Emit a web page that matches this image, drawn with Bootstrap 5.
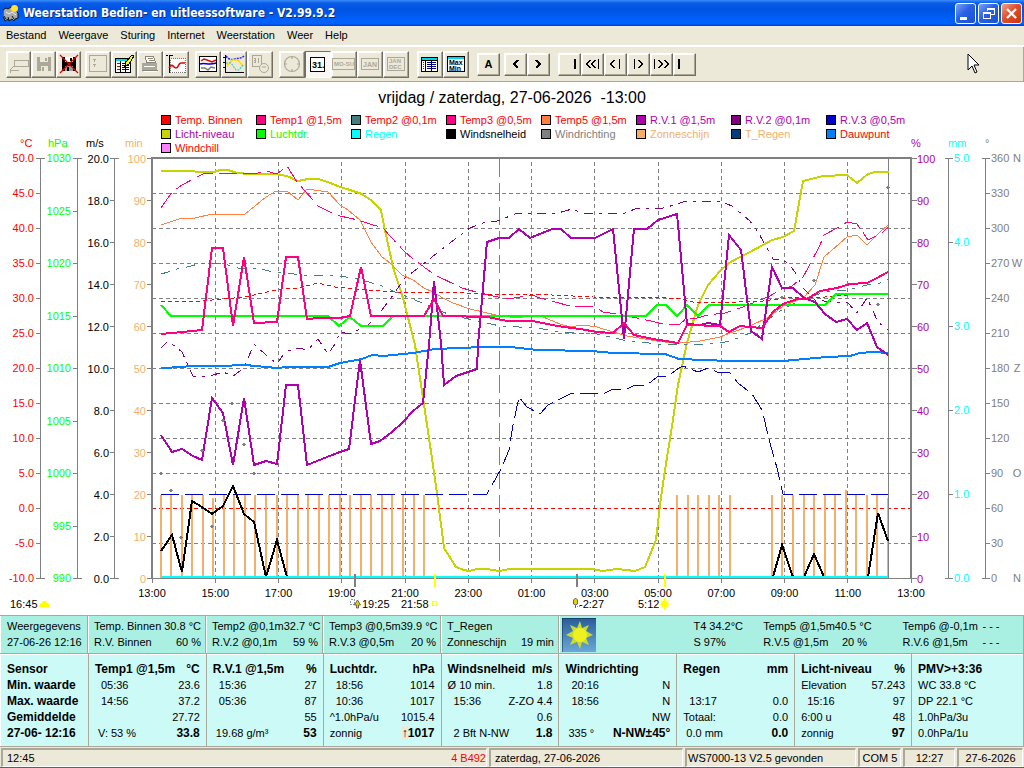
<!DOCTYPE html>
<html lang="nl">
<head>
<meta charset="utf-8">
<meta name="viewport" content="width=device-width, initial-scale=1">
<title>Weerstation Bedien- en uitleessoftware - V2.99.9.2</title>
<link rel="stylesheet" href="https://cdn.jsdelivr.net/npm/bootstrap@5.3.0/dist/css/bootstrap.min.css">
<style>
body{font:11px/16px "Liberation Sans",Arial,sans-serif;color:#000;background:#fff}
.titlebar{height:26px;background:linear-gradient(#3a8cf8 0,#0a5ce8 12%,#0053e1 35%,#0062fc 80%,#0062fc 90%,#003dd7);color:#fff;padding:0 2px 0 3px}
.titlebar h1{font:bold 12px/26px "DejaVu Sans Condensed","DejaVu Sans",sans-serif;text-shadow:1px 1px 0 #0a2c80}
.winbtns{gap:2px}
.wbtn{width:21px;height:21px;padding:0;border:1px solid #fff;border-radius:3px;background:linear-gradient(135deg,#7ba2f5,#2a60e4 45%,#1c50d4);line-height:0}
.wclose{background:linear-gradient(135deg,#f0a08c,#e0502c 45%,#c8340c)}
.menubar{height:21px;background:#ece9d8;border-bottom:2px solid #fff;padding-top:1px}
.menubar a{padding:0 6px;color:#000;text-decoration:none}
.tools{height:35px;background:#ece9d8;border-bottom:1px solid #aca899;border-right:1px solid #aca899;padding-left:6px}
.tbtn{width:26px;height:27px;padding:0;border:1px solid;border-color:#fff #716f64 #716f64 #fff;box-shadow:inset -1px -1px #aca899,inset 1px 1px #fff;background:#ece9d8;line-height:0;display:flex;align-items:center;justify-content:center}
.slim .tbtn{width:25px}
.flat .tbtn{width:23px;height:23px}
.tbtn.held{border-color:#716f64 #fff #fff #716f64;box-shadow:none;background:#f8f7f1}
.g4{margin-left:4px}.g6{margin-left:6px}.g8{margin-left:8px}
.pointer{margin-right:43px}
svg{display:block}
.px{shape-rendering:crispEdges}
.plot{width:100%;height:auto}
.plot text{font-size:11px}
.strip{display:grid;grid-template-columns:88fr 118fr 117fr 118fr 118fr minmax(0,465fr);background:#aaf0e2;border-top:1px solid #aca899;border-bottom:1px solid #aca899;height:39px}
.strip>div{padding:2px 4px 0 5px;border-left:1px solid #fff;border-right:1px solid #aca899;white-space:nowrap;min-width:0}
.strip>div:first-child{padding-left:6px}
.strip>.outdoor{display:grid;grid-template-columns:132fr 70fr 140fr 121fr;padding:2px 0 0 2px}
.pair{display:flex;justify-content:space-between;white-space:pre}
.t5{width:107px}.t6{width:97px}
.panel{table-layout:fixed;width:100%;background:#ccfaf7;border-top:1px solid #fff}
.panel td,.panel th{padding:0 6px;height:16px;border-left:1px solid #fff;border-right:1px solid #aca899;font-weight:400}
.panel thead th{padding-top:6px}
.panel tbody tr:last-child>*{padding-bottom:5px}
.panel thead th,.panel tbody th,.panel b{font-weight:700;font-size:12px}
.ind{padding-left:6px}
.arrow{background:#ece9d8;font-weight:700}
.statusline{display:grid;grid-template-columns:488fr 196fr 173fr 45fr 54fr 68fr;height:21px;background:#ece9d8;border-top:1px solid #aca899}
.statusline>div{margin:1px 1px 0 1px;padding:0 4px;border:1px solid;border-width:2px 1px 1px 2px;border-color:#aca899 #fff #fff #aca899;white-space:nowrap;line-height:16px;min-width:0}
.statusline .tight{padding-left:1px;padding-right:1px}
.alert-count{color:#f00}
.edge{height:2px;background:#2a64d8}
</style>
</head>
<body class="d-flex flex-column min-vh-100">
<header>
<div class="titlebar d-flex align-items-center">
<svg width="16" height="18" viewBox="0 0 16 18"><path d="M0 6l3-2 2 1 3-2 4 3 3 3v5l-3 1-1 2-2-2-3 2-1-2-3 2-1-3-1-1z" fill="#aaa" stroke="#111"/><path d="M3 8l3 2 3-2 4 3" stroke="#eee" fill="none"/><circle cx="11.500" cy="4.500" r="3.500" fill="#ffe32e"/><path d="M1 12l2 3M5 13l1 3M9 12l2 3" stroke="#111"/></svg>
<h1 class="m-0 ms-1">Weerstation Bedien- en uitleessoftware - V2.99.9.2</h1>
<div class="ms-auto d-flex winbtns">
<button class="wbtn" aria-label="Minimaliseren"><svg width="19" height="19"><path d="M4 13h7v3H4z" fill="#fff"/></svg></button>
<button class="wbtn" aria-label="Verkleinen"><svg class="px" width="19" height="19" fill="none" stroke="#fff"><path d="M4.500 8.500h7v6h-7z M4 9.500h8M8 6.500V4.500h7v6h-3M8 5.500h7"/></svg></button>
<button class="wbtn wclose" aria-label="Sluiten"><svg width="19" height="19"><path d="M5 5l9 9M14 5l-9 9" stroke="#fff" stroke-width="2.400"/></svg></button>
</div>
</div>
<nav class="menubar d-flex"><a href="#">Bestand</a><a href="#">Weergave</a><a href="#">Sturing</a><a href="#">Internet</a><a href="#">Weerstation</a><a href="#">Weer</a><a href="#">Help</a></nav>
<div class="tools d-flex align-items-center" role="toolbar">
<div class="d-flex slim">
<button class="tbtn" aria-label="Openen"><svg class="px" width="22" height="22" fill="none" stroke="#aca899"><path d="M6.500 7.500h14v6h-14zM6 13l-4 4M2 17.500h9M2 16v4"/></svg></button>
<button class="tbtn" aria-label="Opslaan"><svg class="px" width="18" height="18"><path d="M2 2h14v14H2z" fill="#aca899"/><path d="M5 2h8v5H5zM6 11h7v5H6z" fill="#ece9d8"/><path d="M10 3h2v3h-2zM7 12h2v4H7z" fill="#aca899"/></svg></button>
<button class="tbtn" aria-label="Niet opslaan"><svg width="20" height="20"><path class="px" d="M3 3h14v14H3z" fill="#000"/><path class="px" d="M6 3h8v5H6z" fill="#fff"/><path class="px" d="M6 12h8v5H6z" fill="#999"/><path class="px" d="M11 4h2v3h-2zM8 13h2v4H8z" fill="#000"/><path d="M1 1l18 18M19 1L1 19" stroke="#e00000" stroke-width="1.200"/></svg></button>
</div>
<div class="d-flex g4">
<button class="tbtn" aria-label="Tabel"><svg class="px" width="20" height="20" fill="none" stroke="#aca899"><path d="M1.500 1.500h17v16h-17zM5 5.500h3M6.500 5v3M5 10.500h3M6.500 10v3"/></svg></button>
<button class="tbtn" aria-label="Bewerken"><svg class="px" width="20" height="20"><path d="M1.500 4.500h15v14h-15z" fill="#fff" stroke="#000"/><path d="M2 5h14v2H2z" fill="#00d8e8"/><path d="M3 9.500h3M3 12.500h3M3 15.500h3" stroke="#c00"/><path d="M8 9.500h7M8 11.500h7M8 13.500h7M8 15.500h7" stroke="#000080"/><path d="M6.500 7v11M11.500 7v11" stroke="#000"/><path d="M18 1l-6 7-1 4 4-2 5-8z" fill="#ff0" stroke="#000"/></svg></button>
<button class="tbtn" aria-label="Afdrukken"><svg class="px" width="20" height="20"><path d="M2 9h15v7H2z" fill="#aca899"/><path d="M5.500 2.500h8l2 6h-9zM8 4.500h5M9 6.500h5" fill="#fff" stroke="#8a877a"/><path d="M4 12.500h11M4 17.500h13" stroke="#fff"/><path d="M2 16.500h16" stroke="#8a877a"/></svg></button>
<button class="tbtn" aria-label="Temperatuurgrafiek"><svg width="22" height="22"><path class="px" d="M5.500 5.500h15v14h-15z" fill="#fff" stroke="#777" stroke-dasharray="1 1"/><path class="px" d="M4.500 5v15M1 2.500h2M5 2.500h3M4.500 2v4" stroke="#000" fill="none"/><path d="M4 15c4-6 4 0 7 0s2-5 5-5l4 0" fill="none" stroke="#e00" stroke-width="1.700"/></svg></button>
</div>
<div class="d-flex g6">
<button class="tbtn" aria-label="Grafiek"><svg width="20" height="20"><path class="px" d="M1.500 2.500h17v15h-17z" fill="#fff" stroke="#000"/><path d="M3 7l3-2 3 1 5 2 4-2" fill="none" stroke="#e00" stroke-width="1.500"/><path d="M2 10c5-2 8 2 16-1" fill="none" stroke="#00c" stroke-width="1.500"/><path d="M3 14h4l3 2 3-3 4 1" fill="none" stroke="#777" stroke-width="1.500"/></svg></button>
<button class="tbtn" aria-label="Meerdere grafieken"><svg width="22" height="20" fill="none"><path class="px" d="M2.500 1v17h18" stroke="#000"/><path class="px" d="M0 3.500h2M0 8.500h2M0 13.500h2" stroke="#000"/><path d="M3 2c3 4 6 4 9 3s6 0 9-3" stroke="#22f" stroke-width="1.500" stroke-dasharray="2 1"/><path d="M4 12l5-6 6 0 5 6" stroke="#fd0" stroke-width="1.700"/><path d="M3 9h5l5 7h3l4-5" stroke="#3cd" stroke-width="1.200" stroke-dasharray="2 1"/></svg></button>
<button class="tbtn" aria-label="Dagklok"><svg width="20" height="20" fill="none" stroke="#aca899"><path class="px" d="M2.500 1.500h9v11h-9zM4 4.500h2M4 6.500h2M4 8.500h2M5.500 4v5M8.500 4v5"/><circle cx="14" cy="14" r="4.500" fill="#ece9d8"/><path d="M12 13h4"/></svg></button>
</div>
<div class="d-flex g6">
<button class="tbtn" aria-label="Klok"><svg width="20" height="20" fill="none" stroke="#aca899" stroke-width="1.200"><circle cx="10" cy="10" r="7.500"/><path d="M10 2v3M10 15v3M2 10h3M15 10h3"/></svg></button>
<button class="tbtn held" aria-label="Dag"><svg width="18" height="18"><path class="px" d="M1.500 2.500h14v14h-14z" fill="#fff" stroke="#000" stroke-width="1"/><text x="3" y="13" font-size="9" font-weight="bold">31.</text></svg></button>
<button class="tbtn" aria-label="Week"><svg width="24" height="18"><path class="px" d="M.5 3.500h22v11h-22z" fill="none" stroke="#aca899"/><text x="2" y="11" font-size="6" font-weight="bold" fill="#aca899">MO-SU</text></svg></button>
<button class="tbtn" aria-label="Maand"><svg width="22" height="18"><path class="px" d="M2.500 3.500h17v11h-17z" fill="none" stroke="#aca899"/><text x="4" y="12" font-size="7" font-weight="bold" fill="#aca899">JAN</text></svg></button>
<button class="tbtn" aria-label="Jaar"><svg width="22" height="18"><path class="px" d="M2.500 2.500h17v13h-17z" fill="none" stroke="#aca899"/><text x="4" y="8" font-size="6" font-weight="bold" fill="#aca899">JAN</text><text x="4" y="14" font-size="6" font-weight="bold" fill="#aca899">DEC</text></svg></button>
</div>
<div class="d-flex g8">
<button class="tbtn" aria-label="Lijst"><svg class="px" width="20" height="18"><path d="M1.500 2.500h16v14h-16z" fill="#fff" stroke="#000"/><path d="M2 3h15v2H2z" fill="#00d8e8"/><path d="M2 5.500h15M5.500 5v11M11.500 5v11" stroke="#000"/><path d="M3 7.500h1M3 9.500h1M3 11.500h1M3 13.500h1" stroke="#c00"/><path d="M7 7.500h9M7 9.500h9M7 11.500h9M7 13.500h9" stroke="#000080"/></svg></button>
<button class="tbtn" aria-label="Max Min"><svg width="20" height="18"><path class="px" d="M1.500 1.500h17v15h-17z" fill="#fff" stroke="#000"/><path class="px" d="M2 2h16v2H2z" fill="#00d8e8"/><text x="3" y="10" font-size="7" font-weight="bold">Max</text><text x="3" y="16" font-size="7" font-weight="bold">Min</text></svg></button>
</div>
<div class="d-flex g8 flat"><button class="tbtn"><b>A</b></button></div>
<div class="d-flex g4 flat">
<button class="tbtn" aria-label="Vorige"><svg class="px" width="9" height="9"><path d="M7 0L3 4l4 4" fill="none" stroke="#000" stroke-width="1.500"/></svg></button>
<button class="tbtn" aria-label="Volgende"><svg class="px" width="9" height="9"><path d="M2 0l4 4-4 4" fill="none" stroke="#000" stroke-width="1.500"/></svg></button>
</div>
<div class="d-flex g8 flat px">
<button class="tbtn" aria-label="Begin"><svg width="17" height="11"><path d="M13 0h2v10h-2z"/></svg></button>
<button class="tbtn" aria-label="Ver terug"><svg width="17" height="11" fill="none" stroke="#000"><path d="M6.500 1L2.500 5l4 4M11.500 1l-4 4 4 4M14.500 0v10"/></svg></button>
<button class="tbtn" aria-label="Terug"><svg width="17" height="11" fill="none" stroke="#000"><path d="M7.500 1l-4 4 4 4M12.500 0v10"/></svg></button>
<button class="tbtn" aria-label="Vooruit"><svg width="17" height="11" fill="none" stroke="#000"><path d="M8.500 1l4 4-4 4M4.500 0v10"/></svg></button>
<button class="tbtn" aria-label="Ver vooruit"><svg width="17" height="11" fill="none" stroke="#000"><path d="M5.500 1l4 4-4 4M11.500 1l4 4-4 4M1.500 0v10"/></svg></button>
<button class="tbtn" aria-label="Einde"><svg width="17" height="11"><path d="M2 0h2v10H2z"/></svg></button>
</div>
<svg class="pointer ms-auto" width="13" height="22"><path d="M1 1v16l4-4 3 7 2-1-3-7h5z" fill="#fff" stroke="#000"/></svg>
</div>
</header>
<main class="flex-grow-1">
<svg class="plot" id="plot" viewBox="0 82 1024 533" role="img" aria-label="Weergrafiek"></svg>
</main>
<footer>
<section class="strip">
<div><div class="pair"><span>Weergegevens</span></div><div class="pair"><span>27-06-26 12:16</span></div></div>
<div><div class="pair"><span>Temp. Binnen</span><span>30.8 °C</span></div><div class="pair"><span>R.V. Binnen</span><span>60 %</span></div></div>
<div><div class="pair"><span>Temp2 @0,1m</span><span>32.7 °C</span></div><div class="pair"><span>R.V.2 @0,1m</span><span>59 %</span></div></div>
<div><div class="pair"><span>Temp3 @0,5m</span><span>39.9 °C</span></div><div class="pair"><span>R.V.3 @0,5m</span><span>20 %</span></div></div>
<div><div class="pair"><span>T_Regen</span></div><div class="pair"><span>Zonneschijn</span><span>19 min</span></div></div>
<div class="outdoor">
<svg width="34" height="34" viewBox="0 0 34 34"><defs><linearGradient id="sky" x2="0" y2="1"><stop stop-color="#2a5c98"/><stop offset="1" stop-color="#6aa8d8"/></linearGradient></defs><path d="M0 0h34v34H0z" fill="url(#sky)"/><path d="M0 34V0h34" fill="none" stroke="#124"/><path d="M18 3l2 7 7-3-3 6 7 4-7 3 3 7-7-3-2 7-3-7-7 3 3-7-7-3 7-4-3-6 7 3z" fill="#c8dc30"/><circle cx="18" cy="17" r="7" fill="#f0f020"/></svg>
<div><div>T4 34.2°C</div><div>S 97%</div></div>
<div class="t5"><div class="pair"><span>Temp5 @1,5m</span><span>40.5 °C</span></div><div class="pair"><span>R.V.5 @1,5m</span><span>20 % </span></div></div>
<div class="t6"><div class="pair"><span>Temp6 @-0,1m</span><span>- - -</span></div><div class="pair"><span>R.V.6 @1,5m</span><span>- - -</span></div></div>
</div>
</section>
<table class="panel">
<colgroup id="cols"></colgroup>
<thead><tr>
<th>Sensor</th>
<th><div class="pair"><span>Temp1 @1,5m</span><span>°C</span></div></th>
<th><div class="pair"><span>R.V.1 @1,5m</span><span>%</span></div></th>
<th><div class="pair"><span>Luchtdr.</span><span>hPa</span></div></th>
<th><div class="pair"><span>Windsnelheid</span><span>m/s</span></div></th>
<th>Windrichting</th>
<th><div class="pair"><span>Regen</span><span>mm</span></div></th>
<th><div class="pair"><span>Licht-niveau</span><span>%</span></div></th>
<th>PMV&gt;+3:36</th></tr></thead>
<tbody>
<tr><th>Min. waarde</th>
<td><div class="pair ind"><span>05:36</span><span>23.6</span></div></td>
<td><div class="pair ind"><span>15:36</span><span>27</span></div></td>
<td><div class="pair ind"><span>18:56</span><span>1014</span></div></td>
<td><div class="pair"><span>Ø 10 min.</span><span>1.8</span></div></td>
<td><div class="pair ind"><span>20:16</span><span>N</span></div></td>
<td></td>
<td><div class="pair"><span>Elevation</span><span>57.243</span></div></td>
<td>WC 33.8 °C</td></tr>
<tr><th>Max. waarde</th>
<td><div class="pair ind"><span>14:56</span><span>37.2</span></div></td>
<td><div class="pair ind"><span>05:36</span><span>87</span></div></td>
<td><div class="pair ind"><span>10:36</span><span>1017</span></div></td>
<td><div class="pair ind"><span>15:36</span><span>Z-ZO 4.4</span></div></td>
<td><div class="pair ind"><span>18:56</span><span>N</span></div></td>
<td><div class="pair ind"><span>13:17</span><span>0.0</span></div></td>
<td><div class="pair ind"><span>15:16</span><span>97</span></div></td>
<td>DP 22.1 °C</td></tr>
<tr><th>Gemiddelde</th>
<td class="text-end">27.72</td>
<td class="text-end">55</td>
<td><div class="pair"><span>^1.0hPa/u</span><span>1015.4</span></div></td>
<td class="text-end">0.6</td>
<td class="text-end">NW</td>
<td><div class="pair"><span>Totaal:</span><span>0.0</span></div></td>
<td><div class="pair"><span>6:00 u</span><span>48</span></div></td>
<td>1.0hPa/3u</td></tr>
<tr><th>27-06- 12:16</th>
<td><div class="pair"><span> V: 53 %</span><b>33.8</b></div></td>
<td><div class="pair"><span> 19.68 g/m³</span><b>53</b></div></td>
<td><div class="pair"><span>zonnig</span><b><span class="arrow">↑</span>1017</b></div></td>
<td><div class="pair ind"><span>2 Bft N-NW</span><b>1.8</b></div></td>
<td><div class="pair"><span> 335 °</span><b>N-NW±45°</b></div></td>
<td><div class="pair"><span> 0.0 mm</span><b>0.0</b></div></td>
<td><div class="pair"><span>zonnig</span><b>97</b></div></td>
<td>0.0hPa/1u</td></tr>
</tbody>
</table>
<div class="statusline">
<div class="d-flex justify-content-between pe-0"><span>12:45</span><span class="alert-count">4 B492</span></div>
<div>zaterdag, 27-06-2026</div>
<div class="tight">WS7000-13 V2.5 gevonden</div>
<div class="tight text-center">COM 5</div>
<div class="text-center">12:27</div>
<div class="text-center">27-6-2026</div>
</div>
<div class="edge"></div>
</footer>
<script src="https://cdn.jsdelivr.net/npm/bootstrap@5.3.0/dist/js/bootstrap.bundle.min.js"></script>
<script>
// Column widths of the sensor panel, as shares of the window width
document.getElementById('cols').innerHTML = [88,118,117,118,118,118,118,117,112]
  .map(w => `<col style="width:${w / 10.24}%">`).join('');

let out = '';
const line = (x1,y1,x2,y2,c='#808080',w=1,d='') => out += `<path class="px" d="M${x1} ${y1}L${x2} ${y2}" stroke="${c}" stroke-width="${w}" stroke-dasharray="${d}"/>`;
const text = (x,y,s,c='#000',a='start',size=11) => out += `<text x="${x}" y="${y}" fill="${c}" text-anchor="${a}" style="font-size:${size}px;white-space:pre">${s}</text>`;
const series = (pts,c,w=1,d='') => out += `<polyline class="px" points="${pts}" fill="none" stroke="${c}" stroke-width="${w}" stroke-dasharray="${d}"/>`;

text(512,103,'vrijdag / zaterdag, 27-06-2026  -13:00','#000','middle',16);

// Legend
[[['#f00','Temp. Binnen','#f00'],['#ff0080','Temp1 @1,5m','#f00'],['#408080','Temp2 @0,1m','#f00'],['#ff0080','Temp3 @0,5m','#f00'],['#ff8040','Temp5 @1,5m','#f00'],['#b000b0','R.V.1 @1,5m','#b000b0'],['#800080','R.V.2 @0,1m','#b000b0'],['#0000d0','R.V.3 @0,5m','#b000b0']],
 [['#c8d400','Licht-niveau','#b000b0'],['#0f0','Luchtdr.','#0f0'],['#0ff','Regen','#0ff'],['#000','Windsnelheid','#000'],['#808080','Windrichting','#808080'],['#f4b06a','Zonneschijn','#f4b06a'],['#004080','T_Regen','#f4b06a'],['#0080ff','Dauwpunt','#f00']],
 [['#ff80ff','Windchill','#f00']]].forEach((row,r) => row.forEach(([fill,name,ink],i) => {
  const x = 161 + 95*i, y = 115 + 14*r;
  out += `<rect class="px" x="${x+.5}" y="${y+.5}" width="9" height="9" fill="${fill}" stroke="#000"/>`;
  text(x+14, y+9, name, ink);
}));

// Grid
const X0 = 151.5, X1 = 911, Y0 = 158, Y1 = 578;
for (let i=1;i<12;i++) { line(152+i*63.25,162,152+i*63.25,Y1,'#808080',1,'4 3'); }
for (let i=1;i<12;i++) line(X0,Y0+35*i+.5,X1,Y0+35*i+.5,i==10?'#f00':'#808080',1,'4 3');
line(499.5,159,499.5,Y1,'#808080',1,'18 6');

// Sunshine minutes
for (let i=0;i<70;i++) if (i<26 || (i>48&&i<55) || i>57) {
  const x = Math.round(159.6+10.54*i);
  out += `<path class="px" d="M${x} ${i==5||i==69?498:i==65?490:495}h2V578h-2z" fill="#f4b06a"/>`;
}
// Plot frame
line(X0,158,X1+1,158,'#808080',2); line(152,157,152,579,'#808080',2); line(911,157,911,579,'#808080',2);
line(152,578.5,911,578.5); line(888.5,159,888.5,578);
for (let i=0;i<13;i++) {
  const x = 152+63.25*i; line(x,578,x,583);
  text(x,597,String((13+2*i)%24).padStart(2,'0')+':00','#000','middle');
}

// Axes on the left
const axis = (x) => { line(x,158,x,579,'#808080',1); line(x-4,158.5,x+4,158.5); line(x-4,578.5,x+4,578.5); };
axis(40.5); axis(77.5); axis(114.5);
for (let i=0;i<13;i++){ line(36,158.5+35*i,40,158.5+35*i); text(34,162+35*i,(50-5*i).toFixed(1),'#f00','end'); }
for (let i=0;i<9;i++){ line(73,158.5+52.5*i,77,158.5+52.5*i); text(71,162+52.5*i,1030-5*i,'#0f0','end'); }
for (let i=0;i<11;i++){
  const y = 158.5+42*i;
  line(110,y,114,y); text(109,y+4,(20-2*i).toFixed(1),'#000','end');
  line(147,y,152,y); text(146,y+4,100-10*i,'#f4b06a','end');
  line(911,y,917,y); text(917,y+4,100-10*i,'#b000b0');
}
// Axes on the right
axis(948.5); axis(985.5);
for (let i=0;i<6;i++){ line(948,158.5+84*i,953,158.5+84*i); text(954,162+84*i,(5-i).toFixed(1),'#0ff'); }
for (let i=0;i<13;i++){ line(985,158.5+35*i,990,158.5+35*i); text(991,162+35*i,360-30*i,'#808080'); }
[[0,'N'],[3,'W'],[6,'Z'],[9,'O'],[12,'N']].forEach(([i,s]) => text(1017,162+35*i,s,'#808080','middle'));
text(20,147,'°C','#f00'); text(48,147,'hPa','#0f0'); text(86,147,'m/s'); text(125,147,'min','#f4b06a');
text(911,147,'%','#b000b0'); text(948,147,'mm','#0ff'); text(985,147,'°','#808080');

// Measured series
series('161,171 182,171 207,172 214,172 220,170 228,170 237,173 250,174 275,174 287,176 298,181 308,179 318,179 328,182 340,187 350,190 362,194 372,201 381,210 386,235 393,267 403,298 415,345 423,398 430,445 437,493 444,548 456,567 464,570 469,571 477,569 487,569 499,571 510,569 593,569 602,571 617,569 635,571 645,567 656,540 660,505 665,470 673,420 678,385 687,343 698,305 708,285 720,271 729,263 740,257 750,252 763,245 772,240 783,237 794,231 803,181 823,176 847,175 857,183 868,174 875,172 889,172','#c8d400',2);
series('161,302 202,301 223,299 245,297 267,292 287,288 298,288 318,283 335,287 367,290 397,292 467,293 487,294 530,294 573,296 593,297 667,298 680,299 693,302 737,302 763,301 793,297 825,297 847,295 888,293','#f00',1,'4 3');
series('161,274 168,272 177,269 187,267 202,263 223,263 233,267 243,269 257,268 273,272 287,273 307,276 322,275 335,275 362,280 382,286 393,291 407,297 430,306 450,315 473,320 500,326 537,328 560,332 597,334 623,340 657,344 680,345 703,344 720,343 730,341 753,332 763,323 783,309 795,303 807,298 825,292 847,290 867,285 880,283 888,279','#408080',1,'9 7 3 7');
series('161,225 182,218 195,218 212,214 245,214 255,206 266,197 276,191 287,191 298,200 307,189 328,192 340,205 348,210 360,220 371,242 382,257 390,263 402,275 413,280 424,288 433,292 443,298 453,303 470,309 483,312 500,316 520,318 530,315 543,317 560,324 570,327 583,325 597,327 613,332 627,336 657,341 673,343 680,343 700,341 720,337 733,332 750,326 767,318 773,314 783,306 803,298 815,285 824,257 847,237 857,235 867,245 880,232 888,225','#ff8040');
series('161,208 172,192 182,185 197,177 205,173 248,173 254,174 266,171 277,174 287,166 292,174 297,182 313,200 318,206 334,214 340,216 358,220 367,223 383,228 390,236 405,252 412,258 428,270 435,275 462,288 483,294 508,299 532,295 540,298 570,306 595,307 603,312 623,315 642,319 668,325 680,324 687,318 697,318 708,315 725,313 740,308 748,305 760,300 768,297 782,289 792,286 803,277 808,268 820,245 824,235 839,227 847,222 857,224 862,231 868,240 882,233 888,227','#ff0080',1,'18 6');
series('161,348 168,341 182,352 190,370 193,376 210,376 223,372 233,376 244,368 254,344 266,355 277,364 285,352 298,348 308,350 318,339 328,354 335,344 340,332 350,334 368,325 382,310 393,295 405,278 422,265 437,253 455,239 470,228 483,223 497,221 518,213 558,213 572,209 582,213 625,213 635,209 663,208 678,204 685,201 720,201 732,206 750,221 758,232 773,259 780,259 788,263 795,272 803,288 815,300 833,302 847,302 857,313 867,298 878,322 888,330','#800080',1,'9 6 3 6');
series('161,494 487,494 492,485 501,469 509,450 513,425 519,397 527,407 540,414 548,405 572,393 605,393 613,389 627,389 635,385 647,385 657,377 668,376 679,368 683,366 698,372 708,368 717,372 730,373 738,383 752,394 762,410 770,443 777,468 783,494 888,494','#0000c0',1,'18 6');
series('161,305 171,316 328,316 339,326 350,317 361,326 383,326 393,316 646,316 657,305 666,305 677,316 680,313 687,305 698,316 709,305 825,305 836,294 888,294','#0f0',2);
series('161,368 183,367 190,366 220,366 245,365 277,368 287,367 328,367 340,363 362,359 372,355 383,356 413,353 435,349 483,347 510,347 537,350 592,351 613,353 665,354 679,359 730,361 783,361 827,357 850,356 860,353 873,352 888,353','#0080ff',2);
series('161,435 172,452 182,449 193,456 202,460 212,398 223,413 233,465 244,398 254,465 266,461 277,464 286,385 298,385 307,465 327,457 340,452 349,449 360,360 371,444 380,441 392,432 403,422 413,411 423,403 429,345 434,281 441,343 444,385 456,376 477,369 478,345 487,242 499,238 509,238 519,229 530,238 552,229 561,229 571,238 595,238 613,229 624,339 634,229 647,229 658,220 677,214 680,246 687,324 700,325 708,323 720,325 729,235 741,250 751,331 762,339 772,267 782,288 793,288 804,298 815,302 825,314 836,322 847,319 857,330 867,323 877,347 888,355','#b000b0',2);
series('161,334 172,333 182,332 202,330 212,248 223,248 233,326 244,257 254,323 277,322 286,257 298,257 307,319 320,318 340,318 350,316 361,267 371,316 424,316 434,299 443,316 488,317 507,321 533,321 557,326 580,329 597,332 613,333 624,323 634,335 653,339 678,343 687,325 720,326 729,332 740,326 750,327 762,328 773,312 783,304 797,299 807,299 820,291 837,288 850,284 867,283 877,278 888,272','#ff0080',2);
['161,551 172,535 182,572 192,501 202,507 212,514 223,506 233,486 244,514 254,522 266,577 277,540 287,577','773,577 782,545 793,577','804,577 814,554 824,577','868,577 878,513 888,541'].forEach(p => series(p,'#000',2));
line(161,577,888,577,'#0ff',2);

// Wind direction marks
[[161,473],[171,490],[181,537],[202,450],[212,526],[223,420],[232,403],[244,444],[254,473],[782,297],[814,280],[878,304],[888,187]]
  .forEach(([x,y]) => out += `<path class="px" d="M${x-2} ${y}h4v1h-4zM${x-1} ${y-1}h2v3h-2z" fill="#808080"/>`);

// Sun and moon times
[[355,'#808080'],[435,'#ff0'],[577,'#808080'],[665,'#ff0']].forEach(([x,c]) => line(x,574,x,587,c,2));
text(10,608,'16:45'); text(362,608,'19:25'); text(401,608,'21:58'); text(579,608,'-2:27'); text(638,608,'5:12');
out += `<path d="M39 607c0-3 2-4 3-4 1-3 4-3 5 0 1 0 3 1 3 4z" fill="#ff0"/>
<rect class="px" x="350.5" y="599.500" width="4" height="5" fill="none" stroke="#8898c0" stroke-dasharray="2 1"/>
<path d="M357.500 600l3 5h-2v3h-2v-3h-2z" fill="#e8d000" stroke="#665"/>
<rect class="px" x="432.500" y="601.500" width="4" height="4" fill="none" stroke="#ff0"/>
<path d="M575.500 608v-3l-2-1v-4l2-2 2 2v4l-2 1" fill="#e8d000" stroke="#665"/>
<path class="px" d="M577 606.500h4" stroke="#8898c0" stroke-dasharray="1 1"/>
<path d="M664.500 598v12M658.500 604h12M660.500 600l8 8M668.500 600l-8 8" stroke="#ff0"/><circle cx="664.500" cy="604" r="3.500" fill="#ff0"/>`;
document.getElementById('plot').innerHTML = out;
</script>
</body>
</html>
